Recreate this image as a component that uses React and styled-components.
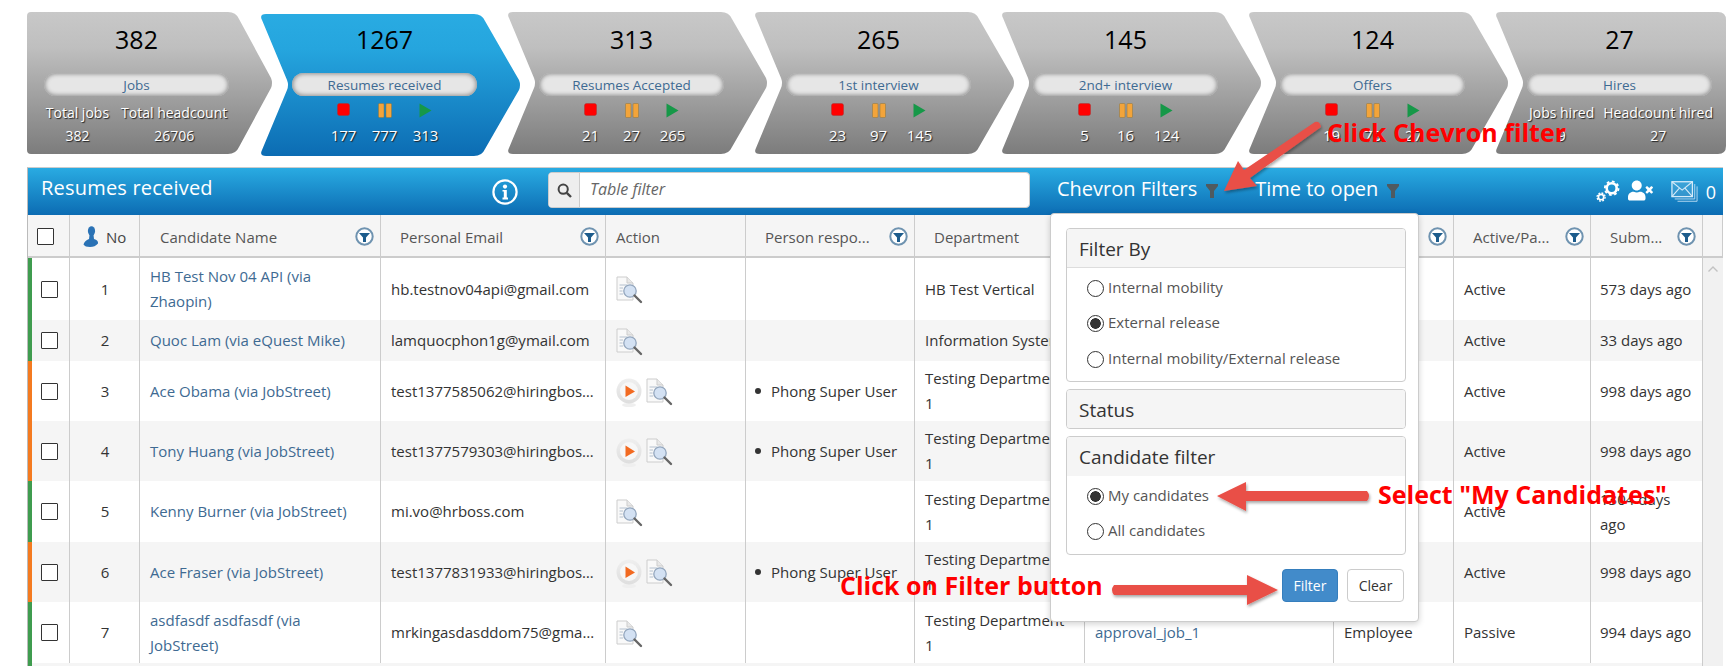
import React from 'react'
import styled, { createGlobalStyle } from 'styled-components'
import { FaUserTimes } from 'react-icons/fa'

const GlobalStyle = createGlobalStyle`
  html, body {
    margin: 0;
    height: 666px;
    overflow: hidden;
    background: #fff;
    font-family: "Open Sans", sans-serif;
    font-size: 15px;
    color: #333;
  }
  * { box-sizing: border-box; }
`

const SHAPES = {
  first:
    "path('M4 0 H201 Q209 0 212 7 L244 66 Q246 71 244 76 L212 135 Q209 142 201 142 H4 Q0 142 0 138 V4 Q0 0 4 0Z')",
  middle:
    "path('M6 0 H214 Q222 0 225 7 L259 66 Q261 71 259 76 L225 135 Q222 142 214 142 H6 Q-1 142 2 136 L27 76 Q29 71 27 66 L2 6 Q-1 0 6 0Z')",
  last:
    "path('M6 0 H223 Q231 0 231 8 V134 Q231 142 223 142 H6 Q-1 142 2 136 L27 76 Q29 71 27 66 L2 6 Q-1 0 6 0Z')",
}

const Page = styled.div`
  padding-top: 12px;
  width: 1729px;
`

const ChevronRow = styled.div`
  display: flex;
  align-items: flex-start;
  height: 155px;
  padding-left: 27px;
`

const Chevron = styled.div`
  flex: none;
  width: ${p => (p.$shape === 'first' ? 246 : p.$shape === 'last' ? 231 : 261)}px;
  height: 142px;
  margin-left: ${p => (p.$shape === 'first' ? 0 : p.$second ? -13 : -14)}px;
  margin-top: ${p => (p.$active ? 2 : 0)}px;
  padding-left: ${p => (p.$shape === 'first' ? 17 : 32)}px;
  clip-path: ${p => SHAPES[p.$shape]};
  background: ${p =>
    p.$active
      ? 'linear-gradient(#29abe2 0%, #25a5de 25%, #0c6cb3 100%)'
      : 'linear-gradient(#c8c8c8 0%, #bfbfbf 25%, #7c7c7c 100%)'};
`

const ChevronBody = styled.div`
  width: 185px;
  display: flex;
  flex-direction: column;
  align-items: center;
  margin-top: ${p => (p.$active ? -2 : 0)}px;
`

const Count = styled.div`
  height: 61px;
  font-size: 25px;
  line-height: 55px;
  color: #000;
`

const Pill = styled.div`
  width: 185px;
  height: 23px;
  border-radius: 12px;
  background: #e6e6e6;
  box-shadow: inset 0 0 4px 1px #8f8f8f;
  color: #3e6a92;
  font-size: 13.5px;
  line-height: 24px;
  text-align: center;
`

const StatusGrid = styled.div`
  display: grid;
  grid-template-columns: repeat(3, 41px);
  justify-items: center;
  margin-top: 7px;
`

const Figure = styled.div`
  color: #fff;
  font-size: 15px;
  line-height: 20px;
  margin-top: 7px;
  text-shadow: 1px 1px 1px #222;
`

const StatPair = styled.div`
  display: flex;
  gap: ${p => p.$gap}px;
  margin-top: 5px;
  margin-left: ${p => p.$shift || 0}px;
`

const Stat = styled.div`
  color: #fff;
  font-size: 14px;
  line-height: 23px;
  text-align: center;
  white-space: nowrap;
  text-shadow: 1px 1px 1px #222;
`

const Panel = styled.div`
  position: relative;
  margin-left: 27px;
  width: 1696px;
  border-left: 1px solid #bbb;
  border-top: 1px solid #ccc;
`

const PanelHeader = styled.div`
  display: flex;
  align-items: center;
  height: 47px;
  padding: 0 7px 0 13px;
  color: #fff;
  background: linear-gradient(#29abe2, #0c6cb3);
`

const PanelTitle = styled.div`
  width: 451px;
  font-size: 20px;
  letter-spacing: 0.2px;
  margin-top: -8px;
`

const InfoButton = styled.svg`
  width: 26px;
  height: 26px;
`

const SearchBox = styled.div`
  display: flex;
  width: 482px;
  height: 36px;
  margin-left: 30px;
  margin-top: -3px;
  border: 1px solid #ccc;
  border-radius: 4px;
  background: #fff;
  overflow: hidden;
`

const SearchAddon = styled.div`
  width: 31px;
  display: flex;
  align-items: center;
  justify-content: center;
  background: #eee;
  border-right: 1px solid #ccc;
`

const SearchText = styled.div`
  padding-left: 10px;
  font-size: 16px;
  line-height: 32px;
  font-style: italic;
  color: #666;
`

const HeaderFilter = styled.div`
  display: flex;
  align-items: center;
  gap: 9px;
  font-size: 20px;
  line-height: 30px;
  margin-left: ${p => p.$left}px;
  margin-top: -6px;
  white-space: nowrap;

  svg {
    margin-top: 5px;
  }
`

const HeaderTools = styled.div`
  display: flex;
  align-items: center;
  margin-left: auto;
`

const UserOff = styled(FaUserTimes)`
  margin: 0 18px 3px 8px;
`

const MailCount = styled.span`
  font-size: 18px;
  margin-left: 8px;
`

const Table = styled.table`
  table-layout: fixed;
  width: 1695px;
  border-collapse: separate;
  border-spacing: 0;
`

const HeadCell = styled.th`
  height: 43px;
  padding: 2px 6px 0 ${p => p.$pad ?? 19}px;
  background: #f5f5f5;
  border-right: 1px solid #ccc;
  border-bottom: 2px solid #ccc;
  font-weight: 400;
  color: #555;
  text-align: left;
`

const HeadInner = styled.div`
  display: flex;
  align-items: center;
  justify-content: space-between;
  white-space: nowrap;
`

const NoLabel = styled.div`
  display: flex;
  align-items: center;
  gap: 7px;
  color: #444;
`

const Row = styled.tr`
  background: ${p => (p.$even ? '#f5f5f5' : '#fff')};
`

const Cell = styled.td`
  height: ${p => p.$h}px;
  padding: 0 9px 0 10px;
  border-right: 1px solid #ccc;
  line-height: 25px;
  color: #333;
  overflow: hidden;
  white-space: ${p => (p.$nowrap ? 'nowrap' : 'normal')};
  text-overflow: ellipsis;
`

const BarCell = styled(Cell)`
  padding: 0 0 0 9px;
  border-left: 4px solid ${p => p.$bar};
`

const NumberCell = styled(Cell)`
  text-align: center;
`

const DaysCell = styled(Cell)`
  padding-left: 9px;
`

const NameLink = styled.span`
  color: #3e6a92;
`

const ScrollTrack = styled.td`
  background: #f1f1f1;
  vertical-align: top;
  text-align: center;
  padding-top: 8px;
  line-height: 0;
`

const Check = styled.input.attrs({ type: 'checkbox', readOnly: true })`
  appearance: none;
  display: block;
  width: 17px;
  height: 17px;
  margin: 0;
  background: #fff;
  border: 1px solid #333;
  border-radius: 1px;
`

const ActionIcons = styled.div`
  display: flex;
  align-items: center;
  gap: 4px;
  padding-top: 2px;
`

const Person = styled.div`
  display: flex;
  align-items: center;
  gap: 10px;
  margin-left: -1px;
  white-space: nowrap;
`

const Bullet = styled.span`
  width: 6px;
  height: 6px;
  border-radius: 50%;
  background: #333;
`

const Popover = styled.div`
  position: absolute;
  left: 1022px;
  top: 45px;
  width: 369px;
  height: 409px;
  padding: 14px 12px 0 15px;
  background: #fff;
  border: 1px solid #ccc;
  border-radius: 4px;
  box-shadow: 0 2px 6px rgba(0, 0, 0, 0.18);
`

const FilterGroup = styled.div`
  border: 1px solid #ccc;
  border-radius: 4px;
  margin-bottom: 7px;
  overflow: hidden;
`

const GroupTitle = styled.div`
  height: ${p => p.$h}px;
  padding-left: 12px;
  background: #f5f5f5;
  border-bottom: ${p => (p.$open ? '1px solid #ddd' : '0')};
  font-size: 19px;
  line-height: 40px;
  color: #333;
`

const GroupBody = styled.div`
  padding: 1px 0 5.5px 20px;
`

const RadioRow = styled.label`
  display: flex;
  align-items: center;
  gap: 4px;
  height: 35.5px;
  color: #555;
`

const Radio = styled.span`
  width: 17px;
  height: 17px;
  margin-top: 3px;
  border-radius: 50%;
  border: 1px solid #333;
  background: ${p => (p.$on ? 'radial-gradient(circle, #333 0 5px, #fff 5.6px)' : '#fff')};
`

const Buttons = styled.div`
  display: flex;
  justify-content: flex-end;
  gap: 9px;
  margin-top: 14px;
  padding-right: 2px;
`

const Button = styled.button`
  width: ${p => p.$w}px;
  height: 33px;
  padding: 0;
  border-radius: 4px;
  border: 1px solid ${p => (p.$primary ? '#357ebd' : '#ccc')};
  background: ${p => (p.$primary ? '#428bca' : '#fff')};
  color: ${p => (p.$primary ? '#fff' : '#333')};
  font-family: inherit;
  font-size: 14px;
`

const Note = styled.div`
  position: absolute;
  left: ${p => p.$x}px;
  top: ${p => p.$y}px;
  color: #f00;
  font-size: 25px;
  font-weight: 700;
  line-height: 30px;
  white-space: nowrap;
`

const ArrowLayer = styled.svg`
  position: absolute;
  left: 0;
  top: 0;
  pointer-events: none;
`

const StopIcon = () => (
  <svg width="13" height="13" viewBox="0 0 13 13">
    <rect x="0.5" y="0.5" width="12" height="12" rx="2" fill="#f00" stroke="#a33" strokeWidth="0.5" />
  </svg>
)

const PauseIcon = () => (
  <svg width="14" height="15" viewBox="0 0 14 15">
    <rect x="0.5" y="0.5" width="5.5" height="14" rx="1" fill="#f3a43a" stroke="#8a7440" strokeWidth="0.5" />
    <rect x="8" y="0.5" width="5.5" height="14" rx="1" fill="#f3a43a" stroke="#8a7440" strokeWidth="0.5" />
  </svg>
)

const PlayIcon = () => (
  <svg width="13" height="15" viewBox="0 0 13 15">
    <path d="M0.5 0.5 L12.5 7.5 L0.5 14.5Z" fill="#169848" />
  </svg>
)

const FunnelIcon = () => (
  <svg width="12" height="14" viewBox="0 0 12 14">
    <path d="M0 0 H12 V2 L8 7 V14 H4 V7 L0 2Z" fill="#4f5a60" />
  </svg>
)

const ColumnFilter = () => (
  <svg width="19" height="19" viewBox="0 0 19 19">
    <circle cx="9.5" cy="9.5" r="8.2" fill="#fff" stroke="#6f93b0" strokeWidth="2" />
    <path d="M4 6 H15 L11 10.5 V15 H8 V10.5Z" fill="#1d5c8c" />
  </svg>
)

const PersonIcon = () => (
  <svg width="16" height="22" viewBox="0 0 16 22">
    <ellipse cx="8.5" cy="5" rx="3.6" ry="4.8" fill="#2a72b5" />
    <path d="M6.5 9 H10.5 L11 13 Q15.5 14 15 17.5 Q12 21 7 21 Q2 21 0.5 18.5 Q1.5 14.5 6 13Z" fill="#2a72b5" />
  </svg>
)

const DocSearchIcon = () => (
  <svg width="27" height="28" viewBox="0 0 27 28">
    <path d="M1 1 H11 L17 7 V24 H1Z" fill="#f9f9f9" stroke="#cdcdcd" />
    <path d="M11 1 V7 H17" fill="#e8e8e8" stroke="#cdcdcd" />
    <path d="M3.5 9 H11 M3.5 12 H7 M3.5 15 H6.5 M3.5 18 H7" stroke="#b4c0ce" />
    <circle cx="14" cy="15" r="6.2" fill="#d3e1f3" stroke="#93a6bd" strokeWidth="1.3" />
    <path d="M18.5 19.5 L25 26" stroke="#666" strokeWidth="2.4" strokeLinecap="round" />
  </svg>
)

const StartIcon = () => (
  <svg width="26" height="29" viewBox="0 0 26 29">
    <defs>
      <linearGradient id="startFace" x1="0" y1="0" x2="0" y2="1">
        <stop offset="0" stopColor="#efefef" />
        <stop offset="1" stopColor="#dedede" />
      </linearGradient>
    </defs>
    <ellipse cx="13" cy="27" rx="7" ry="2" fill="#efefef" />
    <circle cx="13" cy="13" r="12.5" fill="url(#startFace)" />
    <circle cx="13" cy="13" r="9" fill="#f7f7f7" />
    <path d="M9.5 7.5 L19 13.5 L9.5 19Z" fill="#f26a21" />
  </svg>
)

const InfoGlyph = () => (
  <InfoButton viewBox="0 0 26 26">
    <circle cx="13" cy="13" r="11.6" fill="none" stroke="#fff" strokeWidth="2.2" />
    <circle cx="13" cy="7.6" r="2.1" fill="#fff" />
    <path d="M10.5 11 H14.8 V18.6 H16 V20.4 H10.5 V18.6 H11.8 V12.6 H10.5Z" fill="#fff" />
  </InfoButton>
)

const SearchGlyph = () => (
  <svg width="15" height="15" viewBox="0 0 15 15">
    <circle cx="6.2" cy="6.2" r="4.6" fill="none" stroke="#444" strokeWidth="2" />
    <path d="M9.8 9.8 L14 14" stroke="#444" strokeWidth="2.4" />
  </svg>
)

const GearsIcon = () => (
  <svg width="24" height="23" viewBox="0 0 26 24">
    <circle cx="17" cy="8.5" r="5.4" fill="none" stroke="#fff" strokeWidth="2.8" />
    <circle cx="17" cy="8.5" r="7.4" fill="none" stroke="#fff" strokeWidth="2" strokeDasharray="3 2.8" />
    <circle cx="5.5" cy="18" r="2.9" fill="none" stroke="#fff" strokeWidth="1.8" />
    <circle cx="5.5" cy="18" r="4.4" fill="none" stroke="#fff" strokeWidth="1.4" strokeDasharray="2 1.45" />
  </svg>
)

const MailIcon = () => (
  <svg width="27" height="23" viewBox="0 0 29 23">
    <path d="M7 22 H28 V6" fill="none" stroke="#b9dcf3" />
    <path d="M4 19.5 H25.5 V3.5" fill="none" stroke="#b9dcf3" />
    <rect x="1" y="1" width="22" height="16" fill="rgba(255,255,255,0.12)" stroke="#d5ebf9" strokeWidth="1.4" />
    <path d="M1 1 L12 10 L23 1 M1 17 L9 8 M23 17 L15 8" fill="none" stroke="#d5ebf9" strokeWidth="1.2" />
  </svg>
)

const ScrollUp = () => (
  <svg width="10" height="6" viewBox="0 0 10 6">
    <path d="M0.5 5.5 L5 1 L9.5 5.5" fill="none" stroke="#c2c2c2" strokeWidth="1.4" />
  </svg>
)

const AnnotationArrows = () => (
  <ArrowLayer width="1729" height="666" viewBox="0 0 1729 666">
    <defs>
      <filter id="arrowShadow" x="-20%" y="-20%" width="140%" height="140%">
        <feDropShadow dx="1" dy="2" stdDeviation="1.5" floodColor="#000" floodOpacity="0.35" />
      </filter>
    </defs>
    <g fill="#e94f47" filter="url(#arrowShadow)">
      <path d="M1315 122 Q1320 121 1321 127 L1250 178 L1257 186 L1224 191 L1238 161 L1244 170Z" />
      <path d="M1217 496 L1246 482 V491 H1367 Q1371 496 1367 501 H1246 V511Z" />
      <path d="M1278 590 L1247 575 V585 H1114 Q1110 590 1114 595 H1247 V605Z" />
    </g>
  </ArrowLayer>
)

const stages = [
  { shape: 'first', count: 382, label: 'Jobs', pair: [['Total jobs', 382], ['Total headcount', 26706]], gap: 12, shift: 0 },
  { shape: 'middle', second: true, active: true, count: 1267, label: 'Resumes received', status: [177, 777, 313] },
  { shape: 'middle', count: 313, label: 'Resumes Accepted', status: [21, 27, 265] },
  { shape: 'middle', count: 265, label: '1st interview', status: [23, 97, 145] },
  { shape: 'middle', count: 145, label: '2nd+ interview', status: [5, 16, 124] },
  { shape: 'middle', count: 124, label: 'Offers', status: [19, 78, 27] },
  { shape: 'last', count: 27, label: 'Hires', pair: [['Jobs hired', 9], ['Headcount hired', 27]], gap: 9, shift: 3 },
]

const widths = [42, 70, 241, 225, 140, 169, 170, 249, 120, 137, 112, 20]

const heads = [
  { key: 'name', text: 'Candidate Name', filter: true, pad: 20 },
  { key: 'email', text: 'Personal Email', filter: true, pad: 19 },
  { key: 'action', text: 'Action', pad: 10 },
  { key: 'person', text: 'Person respo...', filter: true, pad: 19 },
  { key: 'dept', text: 'Department', filter: true, pad: 19 },
  { key: 'job', text: '', filter: true, pad: 18 },
  { key: 'type', text: '', filter: true, pad: 18 },
  { key: 'active', text: 'Active/Pa...', filter: true, pad: 19 },
  { key: 'subm', text: 'Subm...', filter: true, pad: 19 },
]

const testingDept = ['Testing Department', '1']

const rows = [
  { no: 1, h: 62, bar: '#3f9c4f', name: 'HB Test Nov 04 API (via Zhaopin)', email: 'hb.testnov04api@gmail.com', dept: ['HB Test Vertical'], state: 'Active', days: '573 days ago' },
  { no: 2, h: 41, bar: '#3f9c4f', name: 'Quoc Lam (via eQuest Mike)', email: 'lamquocphon1g@ymail.com', dept: ['Information Systems'], state: 'Active', days: '33 days ago' },
  { no: 3, h: 60, bar: '#f47a20', name: 'Ace Obama (via JobStreet)', email: 'test1377585062@hiringboss.com', start: true, person: 'Phong Super User', dept: testingDept, state: 'Active', days: '998 days ago' },
  { no: 4, h: 60, bar: '#f47a20', name: 'Tony Huang (via JobStreet)', email: 'test1377579303@hiringboss.com', start: true, person: 'Phong Super User', dept: testingDept, state: 'Active', days: '998 days ago' },
  { no: 5, h: 61, bar: '#3f9c4f', name: 'Kenny Burner (via JobStreet)', email: 'mi.vo@hrboss.com', dept: testingDept, state: 'Active', days: '1304 days ago' },
  { no: 6, h: 60, bar: '#f47a20', name: 'Ace Fraser (via JobStreet)', email: 'test1377831933@hiringboss.com', start: true, person: 'Phong Super User', dept: testingDept, state: 'Active', days: '998 days ago' },
  { no: 7, h: 61, bar: '#3f9c4f', name: 'asdfasdf asdfasdf (via JobStreet)', email: 'mrkingasdasddom75@gmail.com', dept: testingDept, job: 'approval_job_1', type: 'Employee', state: 'Passive', days: '994 days ago' },
]

const filterGroups = [
  { title: 'Filter By', options: [['Internal mobility'], ['External release', true], ['Internal mobility/External release']] },
  { title: 'Status' },
  { title: 'Candidate filter', options: [['My candidates', true], ['All candidates']] },
]

const StageChevron = ({ stage }) => (
  <Chevron $shape={stage.shape} $second={stage.second} $active={stage.active}>
    <ChevronBody $active={stage.active}>
      <Count>{stage.count}</Count>
      <Pill>{stage.label}</Pill>
      {stage.status ? (
        <StatusGrid>
          <StopIcon />
          <PauseIcon />
          <PlayIcon />
          {stage.status.map((n, i) => (
            <Figure key={i}>{n}</Figure>
          ))}
        </StatusGrid>
      ) : (
        <StatPair $gap={stage.gap} $shift={stage.shift}>
          {stage.pair.map(([label, value]) => (
            <Stat key={label}>
              {label}
              <br />
              {value}
            </Stat>
          ))}
        </StatPair>
      )}
    </ChevronBody>
  </Chevron>
)

const CandidateRow = ({ row, children }) => (
  <Row $even={row.no % 2 === 0}>
    <BarCell $h={row.h} $bar={row.bar}>
      <Check />
    </BarCell>
    <NumberCell $h={row.h}>{row.no}</NumberCell>
    <Cell $h={row.h}>
      <NameLink>{row.name}</NameLink>
    </Cell>
    <Cell $h={row.h} $nowrap>
      {row.email}
    </Cell>
    <Cell $h={row.h}>
      <ActionIcons>
        {row.start && <StartIcon />}
        <DocSearchIcon />
      </ActionIcons>
    </Cell>
    <Cell $h={row.h}>
      {row.person && (
        <Person>
          <Bullet />
          {row.person}
        </Person>
      )}
    </Cell>
    <Cell $h={row.h} $nowrap>
      {row.dept.map(line => (
        <div key={line}>{line}</div>
      ))}
    </Cell>
    <Cell $h={row.h}>
      <NameLink>{row.job}</NameLink>
    </Cell>
    <Cell $h={row.h}>{row.type}</Cell>
    <Cell $h={row.h}>{row.state}</Cell>
    <DaysCell $h={row.h}>{row.days}</DaysCell>
    {children}
  </Row>
)

const App = () => (
  <Page>
    <GlobalStyle />
    <ChevronRow>
      {stages.map(stage => (
        <StageChevron key={stage.label} stage={stage} />
      ))}
    </ChevronRow>

    <Panel>
      <PanelHeader>
        <PanelTitle>Resumes received</PanelTitle>
        <InfoGlyph />
        <SearchBox>
          <SearchAddon>
            <SearchGlyph />
          </SearchAddon>
          <SearchText>Table filter</SearchText>
        </SearchBox>
        <HeaderFilter $left={27}>
          Chevron Filters <FunnelIcon />
        </HeaderFilter>
        <HeaderFilter $left={37}>
          Time to open <FunnelIcon />
        </HeaderFilter>
        <HeaderTools>
          <GearsIcon />
          <UserOff size={25} />
          <MailIcon />
          <MailCount>0</MailCount>
        </HeaderTools>
      </PanelHeader>

      <Table>
        <colgroup>
          {widths.map((w, i) => (
            <col key={i} width={w} />
          ))}
        </colgroup>
        <thead>
          <tr>
            <HeadCell $pad={9}>
              <Check />
            </HeadCell>
            <HeadCell $pad={13}>
              <NoLabel>
                <PersonIcon /> No
              </NoLabel>
            </HeadCell>
            {heads.map(head => (
              <HeadCell key={head.key} $pad={head.pad}>
                <HeadInner>
                  <span>{head.text}</span>
                  {head.filter && <ColumnFilter />}
                </HeadInner>
              </HeadCell>
            ))}
            <HeadCell />
          </tr>
        </thead>
        <tbody>
          {rows.map((row, i) => (
            <CandidateRow key={row.no} row={row}>
              {i === 0 && (
                <ScrollTrack rowSpan={8}>
                  <ScrollUp />
                </ScrollTrack>
              )}
            </CandidateRow>
          ))}
          <Row $even>
            <BarCell $h={3} $bar="#3f9c4f" colSpan={11} />
          </Row>
        </tbody>
      </Table>

      <Popover>
        {filterGroups.map(group => (
          <FilterGroup key={group.title}>
            <GroupTitle $h={group.options ? 39 : 38} $open={group.title === 'Filter By'}>
              {group.title}
            </GroupTitle>
            {group.options && (
              <GroupBody>
                {group.options.map(([label, on]) => (
                  <RadioRow key={label}>
                    <Radio $on={on} />
                    {label}
                  </RadioRow>
                ))}
              </GroupBody>
            )}
          </FilterGroup>
        ))}
        <Buttons>
          <Button $primary $w={56}>
            Filter
          </Button>
          <Button $w={57}>Clear</Button>
        </Buttons>
      </Popover>
    </Panel>

    <AnnotationArrows />
    <Note $x={1327} $y={117}>Click Chevron filter</Note>
    <Note $x={1378} $y={479}>Select "My Candidates"</Note>
    <Note $x={840} $y={570}>Click on Filter button</Note>
  </Page>
)

export default App
